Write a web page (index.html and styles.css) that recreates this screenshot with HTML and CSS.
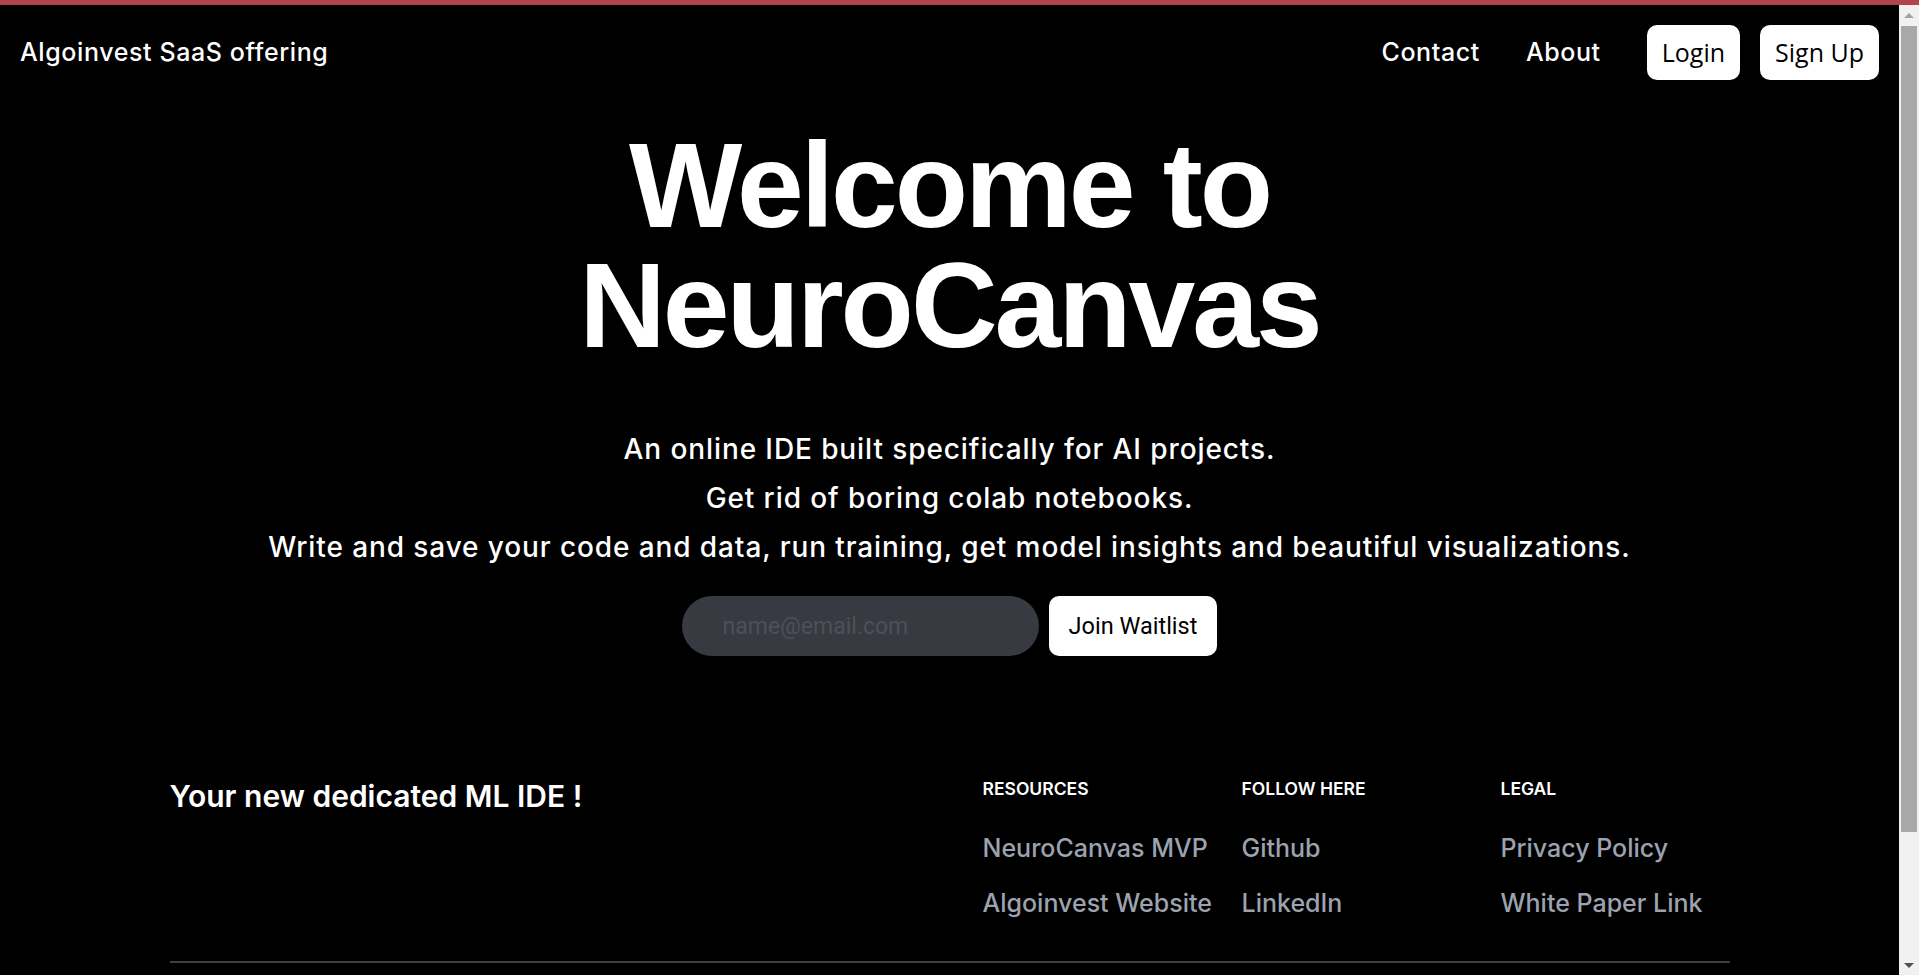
FILE: index.html
```html
<!DOCTYPE html>
<html lang="en">
<head>
<meta charset="utf-8">
<title>NeuroCanvas</title>
<link rel="stylesheet" href="styles.css">
</head>
<body>
<div class="topbar"></div>
<div class="window">
  <div class="page">
    <nav class="nav">
      <a class="brand" href="#">Algoinvest SaaS offering</a>
      <div class="nav-right">
        <div class="links">
          <a class="nav-link" href="#">Contact</a>
          <a class="nav-link" href="#">About</a>
        </div>
        <div class="auth">
          <button class="nav-btn">Login</button>
          <button class="nav-btn">Sign Up</button>
        </div>
      </div>
    </nav>

    <section class="hero">
      <h1 class="title">Welcome to<br>NeuroCanvas</h1>
      <div class="sub">
        <p>An online IDE built specifically for AI projects.</p>
        <p>Get rid of boring colab notebooks.</p>
        <p>Write and save your code and data, run training, get model insights and beautiful visualizations.</p>
      </div>
      <form class="waitlist" onsubmit="return false">
        <input class="email" type="email" placeholder="name@email.com">
        <button class="join" type="submit">Join Waitlist</button>
      </form>
    </section>

    <footer class="footer">
      <div class="footer-top">
        <div class="tagline">Your new dedicated ML IDE !</div>
        <div class="cols">
          <div class="col">
            <h2 class="col-title">Resources</h2>
            <ul class="col-list">
              <li><a href="#">NeuroCanvas MVP</a></li>
              <li><a href="#">Algoinvest Website</a></li>
            </ul>
          </div>
          <div class="col">
            <h2 class="col-title">Follow here</h2>
            <ul class="col-list">
              <li><a href="#">Github</a></li>
              <li><a href="#">LinkedIn</a></li>
            </ul>
          </div>
          <div class="col">
            <h2 class="col-title">Legal</h2>
            <ul class="col-list">
              <li><a href="#">Privacy Policy</a></li>
              <li><a href="#">White Paper Link</a></li>
            </ul>
          </div>
        </div>
      </div>
      <hr class="rule">
    </footer>
  </div>
  <div class="scrollbar">
    <div class="sb-arrow sb-up"></div>
    <div class="sb-track"><div class="sb-thumb"></div></div>
    <div class="sb-arrow sb-down"></div>
  </div>
</div>
</body>
</html>
```
FILE: styles.css
```css
html, body {
  margin: 0;
  padding: 0;
  background: #000;
  height: 100%;
  overflow: hidden;
}
body {
  font-family: "Inter", "Liberation Sans", sans-serif;
  color: #fff;
}
a {
  color: inherit;
  text-decoration: none;
}
.topbar {
  height: 5px;
  background: #b0464a;
}
.window {
  display: flex;
  height: 970px;
}
.page {
  flex: 1;
  min-width: 0;
  overflow: hidden;
}

/* NAV */
.nav {
  display: flex;
  justify-content: space-between;
  align-items: center;
  padding: 20px;
}
.brand {
  font-size: 25px;
  font-weight: 500;
  line-height: 35px;
  letter-spacing: 0.6px;
}
.nav-right {
  display: flex;
  align-items: center;
}
.links {
  display: flex;
  gap: 46px;
  margin-right: 46px;
}
.nav-link {
  font-size: 25px;
  font-weight: 500;
  line-height: 35px;
  letter-spacing: 0.6px;
}
.auth {
  display: flex;
  gap: 20px;
}
.nav-btn {
  background: #fff;
  color: #000;
  border: none;
  border-radius: 10px;
  padding: 10px 15px;
  height: 55px;
  font-family: "Open Sans", "Noto Sans", sans-serif;
  font-size: 25px;
  line-height: 35px;
  cursor: pointer;
}

/* HERO */
.hero {
  text-align: center;
  margin-top: 25px;
}
.title {
  margin: 0;
  font-family: "Liberation Sans", Arial, sans-serif;
  font-weight: 700;
  font-size: 120px;
  line-height: 120px;
  letter-spacing: -3px;
}
.sub {
  margin-top: 60px;
}
.sub p {
  margin: 0;
  font-size: 28px;
  font-weight: 500;
  line-height: 49px;
  letter-spacing: 0.9px;
}
.waitlist {
  display: flex;
  justify-content: center;
  gap: 10px;
  margin-top: 24px;
}
.email {
  box-sizing: border-box;
  width: 357px;
  height: 60px;
  border: none;
  outline: none;
  border-radius: 9999px;
  background: #383a42;
  padding: 0 20px 0 41px;
  font-family: "Roboto", sans-serif;
  font-size: 23px;
  color: #fff;
}
.email::placeholder {
  color: #4d5059;
}
.join {
  height: 60px;
  border: none;
  border-radius: 10px;
  background: #fff;
  color: #000;
  padding: 0 20px;
  font-family: "Roboto", sans-serif;
  font-size: 23.5px;
  cursor: pointer;
}

/* FOOTER */
.footer {
  max-width: 1600px;
  margin: 80px auto 0;
  padding: 40px 20px 0;
  box-sizing: border-box;
}
.footer-top {
  display: flex;
  justify-content: space-between;
}
.tagline {
  font-size: 30px;
  font-weight: 600;
  line-height: 41px;
  white-space: nowrap;
}
.cols {
  display: grid;
  grid-template-columns: repeat(3, 229px);
  gap: 30px;
}
.col-title {
  margin: 0 0 30px;
  font-size: 17.5px;
  line-height: 25px;
  font-weight: 600;
  text-transform: uppercase;
}
.col-list {
  list-style: none;
  margin: 0;
  padding: 0;
  color: #9ca3af;
  font-size: 25px;
  line-height: 35px;
  font-weight: 500;
  white-space: nowrap;
}
.col-list li + li {
  margin-top: 20px;
}
.rule {
  margin: 40px 0 0;
  border: none;
  border-top: 2px solid #3a3f48;
}

/* FAKE SCROLLBAR */
.scrollbar {
  width: 20px;
  flex: none;
  background: #f1f1f1;
  display: flex;
  flex-direction: column;
}
.sb-arrow {
  height: 20px;
  flex: none;
  display: flex;
  align-items: center;
  justify-content: center;
}
.sb-up::before {
  content: "";
  border-left: 5px solid transparent;
  border-right: 5px solid transparent;
  border-bottom: 5px solid #a3a3a3;
}
.sb-down::before {
  content: "";
  border-left: 5px solid transparent;
  border-right: 5px solid transparent;
  border-top: 5px solid #505050;
}
.sb-track {
  flex: 1;
  padding: 1px 2px;
}
.sb-thumb {
  height: 806px;
  background: #a8a8a8;
}
```
